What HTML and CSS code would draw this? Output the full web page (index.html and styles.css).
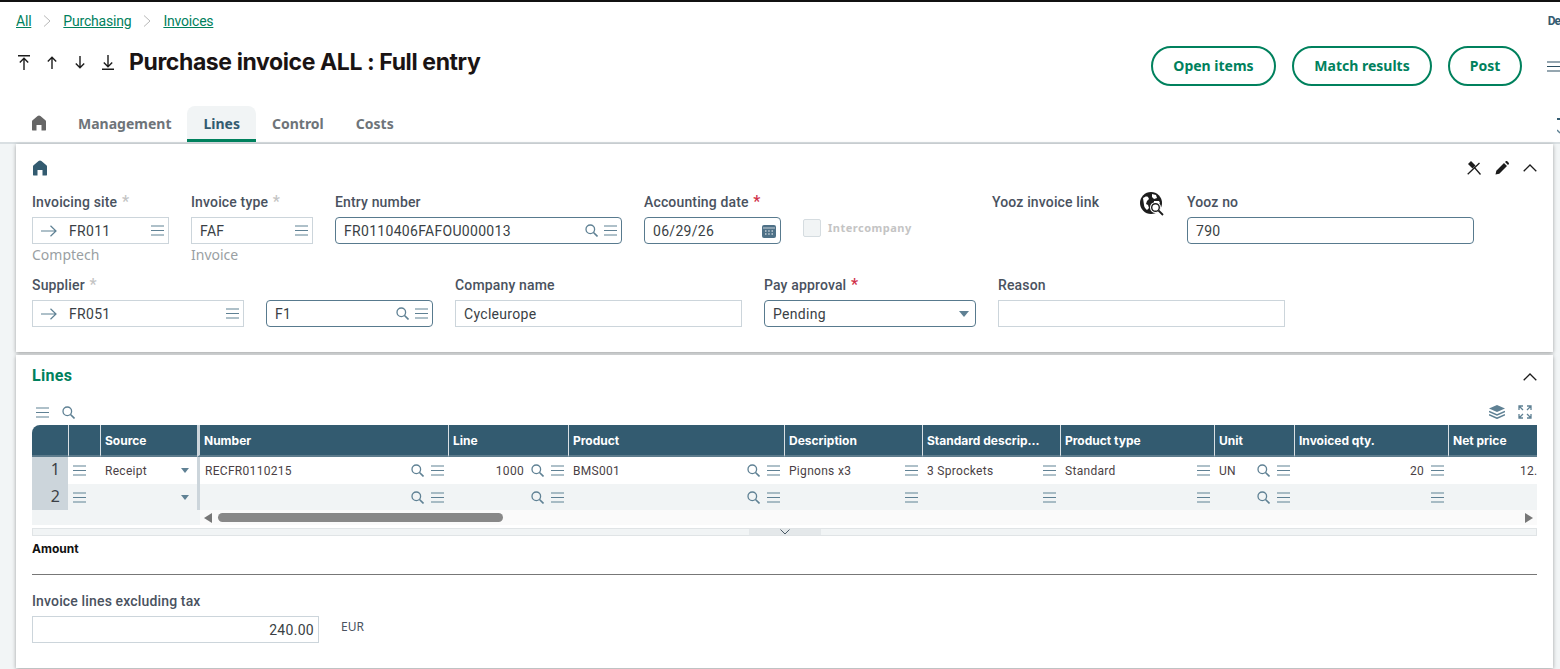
FILE: index.html
```html
<!DOCTYPE html>
<html lang="en">
<head>
    <meta charset="UTF-8">
    <title>Purchase invoice ALL : Full entry</title>
    <link rel="stylesheet" href="styles.css">
</head>
<body>
    <svg class="sprite" xmlns="http://www.w3.org/2000/svg">
        <symbol id="i-menu" viewBox="0 0 13 11"><path d="M0 1h13M0 5.500h13M0 10h13" fill="none" stroke="currentColor" stroke-width="1.200"/></symbol>
        <symbol id="i-search" viewBox="0 0 13 13"><circle cx="5.300" cy="5.300" r="4.300" fill="none" stroke="currentColor" stroke-width="1.300"/><path d="M8.500 8.500l4 4" stroke="currentColor" stroke-width="1.600"/></symbol>
        <symbol id="i-arrow" viewBox="0 0 16 12"><path d="M0 6h15M9.500 .8L15 6l-5.500 5.200" fill="none" stroke="currentColor" stroke-width="1.200"/></symbol>
        <symbol id="i-home" viewBox="0 0 16 16"><path d="M8 .5c.5 0 1 .2 1.400.5l5 4.200c.4.400.6.800.6 1.400V15c0 .3-.2.500-.5.500H10.500V10h-5v5.500H1.500c-.3 0-.5-.2-.5-.5V6.600c0-.6.200-1 .6-1.400L6.600 1C7 .7 7.500.5 8 .5z" fill="currentColor"/></symbol>
        <symbol id="i-chev" viewBox="0 0 14 8"><path d="M.7 7.300L7 1l6.300 6.300" fill="none" stroke="currentColor" stroke-width="1.300"/></symbol>
        <symbol id="i-caret" viewBox="0 0 10 6"><path d="M0 0h10L5 6z" fill="currentColor"/></symbol>
        <symbol id="i-top" viewBox="0 0 12 15"><path d="M0 .7h12M6 15V3.500M1.800 7.500L6 3.300l4.200 4.200" fill="none" stroke="currentColor" stroke-width="1.400"/></symbol>
        <symbol id="i-up" viewBox="0 0 12 15"><path d="M6 14V2.500M1.800 6.500L6 2.300l4.200 4.200" fill="none" stroke="currentColor" stroke-width="1.400"/></symbol>
        <symbol id="i-down" viewBox="0 0 12 15"><path d="M6 1v11.500M1.800 8.500L6 12.700l4.200-4.200" fill="none" stroke="currentColor" stroke-width="1.400"/></symbol>
        <symbol id="i-bottom" viewBox="0 0 12 15"><path d="M0 14.300h12M6 0v11.500M1.800 7.500L6 11.700l4.200-4.200" fill="none" stroke="currentColor" stroke-width="1.400"/></symbol>
    </svg>

    <div class="topline"></div>

    <header class="header">
        <div class="crumbs">
            <a href="#">All</a>
            <svg class="crumb-sep" viewBox="0 0 7 12"><path d="M.5.5L6.500 6 .5 11.500" fill="none" stroke="currentColor"/></svg>
            <a href="#">Purchasing</a>
            <svg class="crumb-sep" viewBox="0 0 7 12"><path d="M.5.5L6.500 6 .5 11.500" fill="none" stroke="currentColor"/></svg>
            <a href="#">Invoices</a>
            <span class="user">De</span>
        </div>
        <div class="title-row">
            <div class="nav-arrows">
                <svg class="nav-arrow"><use href="#i-top"/></svg>
                <svg class="nav-arrow"><use href="#i-up"/></svg>
                <svg class="nav-arrow"><use href="#i-down"/></svg>
                <svg class="nav-arrow"><use href="#i-bottom"/></svg>
            </div>
            <h1>Purchase invoice ALL : Full entry</h1>
            <div class="actions">
                <button class="pill pill-open">Open items</button>
                <button class="pill pill-match">Match results</button>
                <button class="pill pill-post">Post</button>
                <svg class="page-menu"><use href="#i-menu"/></svg>
            </div>
        </div>
        <nav class="tabs">
            <svg class="tab-home"><use href="#i-home"/></svg>
            <a class="tab" href="#">Management</a>
            <a class="tab active" href="#">Lines</a>
            <a class="tab" href="#">Control</a>
            <a class="tab" href="#">Costs</a>
            <svg class="tab-edge" viewBox="0 0 3 17"><path d="M0 0h3v2H0z" fill="#335b70"/><path d="M0 12l3 3" fill="none" stroke="#5f8194" stroke-width="1.500"/></svg>
        </nav>
    </header>

    <main class="content">
        <section class="card card-top">
            <div class="card-head">
                <svg class="card-home"><use href="#i-home"/></svg>
                <div class="card-tools">
                    <svg class="tool" viewBox="0 0 14 14"><path d="M2.500 1.500L7 6" fill="none" stroke="#1c1c1c" stroke-width="4.200"/><path d="M7 6l6.500 7.500M.7 13.300L12.500 2" fill="none" stroke="#1c1c1c" stroke-width="1.300"/></svg>
                    <svg class="tool" viewBox="0 0 14 14"><path d="M.5 13.500l.8-3.800L9 2l3 3-7.700 7.700zM10 1l.8-.7c.5-.4 1-.4 1.500 0l1.400 1.400c.4.500.4 1 0 1.500L13 4z" fill="#1c1c1c"/></svg>
                    <svg class="tool tool-chev"><use href="#i-chev"/></svg>
                </div>
            </div>

            <div class="field-row">
                <div class="field w-137">
                    <label>Invoicing site <span class="star">*</span></label>
                    <div class="input plain"><svg class="go"><use href="#i-arrow"/></svg><span class="val">FR011</span><svg class="ico"><use href="#i-menu"/></svg></div>
                    <div class="hint">Comptech</div>
                </div>
                <div class="field w-122">
                    <label>Invoice type <span class="star">*</span></label>
                    <div class="input plain"><span class="val">FAF</span><svg class="ico"><use href="#i-menu"/></svg></div>
                    <div class="hint">Invoice</div>
                </div>
                <div class="field w-287">
                    <label>Entry number</label>
                    <div class="input edit"><span class="val">FR0110406FAFOU000013</span><svg class="ico-s"><use href="#i-search"/></svg><svg class="ico"><use href="#i-menu"/></svg></div>
                </div>
                <div class="field w-137">
                    <label>Accounting date <span class="star req">*</span></label>
                    <div class="input edit"><span class="val">06/29/26</span>
                        <svg class="ico-cal" viewBox="0 0 14 14"><path d="M2 1h10a2 2 0 0 1 2 2v9a2 2 0 0 1-2 2H2a2 2 0 0 1-2-2V3a2 2 0 0 1 2-2z" fill="#4f7187"/><path d="M1 4h12" stroke="#fff" stroke-width=".7"/><path d="M3 7h1.500M6.200 7h1.500M9.500 7H11M3 10h1.500M6.200 10h1.500M9.500 10H11" stroke="#fff" stroke-width="1.200"/></svg>
                    </div>
                </div>
                <div class="check-field">
                    <span class="check"></span>
                    <span class="check-label">Intercompany</span>
                </div>
                <div class="link-field">
                    <label>Yooz invoice link</label>
                    <svg class="globe" viewBox="0 0 24 24">
                        <circle cx="11" cy="11" r="11" fill="#1c1c1c"/>
                        <path d="M3 6c2-1 3-2 5-1l1 2-2 2-1 3 2 1 1 3-2 2c-2-2-3-3-3-5zM12 2l4 1 1 3-3 1-2-2zM14 9l5 0 1 2-3 2-3-1z" fill="#fff"/>
                        <circle cx="15.500" cy="15.500" r="5.500" fill="#fff"/>
                        <circle cx="15.500" cy="15.500" r="3.800" fill="#fff" stroke="#1c1c1c" stroke-width="1.400"/>
                        <path d="M18.500 18.500l4.500 4.500" stroke="#1c1c1c" stroke-width="1.800"/>
                    </svg>
                </div>
                <div class="field w-287">
                    <label>Yooz no</label>
                    <div class="input edit"><span class="val">790</span></div>
                </div>
            </div>

            <div class="field-row row-two">
                <div class="field w-212">
                    <label>Supplier <span class="star">*</span></label>
                    <div class="input plain"><svg class="go"><use href="#i-arrow"/></svg><span class="val">FR051</span><svg class="ico"><use href="#i-menu"/></svg></div>
                </div>
                <div class="field w-167">
                    <label>&nbsp;</label>
                    <div class="input edit"><span class="val">F1</span><svg class="ico-s"><use href="#i-search"/></svg><svg class="ico"><use href="#i-menu"/></svg></div>
                </div>
                <div class="field w-287">
                    <label>Company name</label>
                    <div class="input plain"><span class="val">Cycleurope</span></div>
                </div>
                <div class="field w-212">
                    <label>Pay approval <span class="star req">*</span></label>
                    <div class="input edit"><span class="val">Pending</span><svg class="ico-caret"><use href="#i-caret"/></svg></div>
                </div>
                <div class="field w-287">
                    <label>Reason</label>
                    <div class="input plain"></div>
                </div>
            </div>
        </section>

        <section class="card card-lines">
            <div class="lines-head">
                <h2>Lines</h2>
                <svg class="tool tool-chev"><use href="#i-chev"/></svg>
            </div>
            <div class="grid-tools">
                <svg class="ico"><use href="#i-menu"/></svg>
                <svg class="ico-s"><use href="#i-search"/></svg>
                <svg class="layers" viewBox="0 0 16 14"><path d="M8 0l8 3.500L8 7 0 3.500z" fill="#5f8194"/><path d="M0 6.500L8 10l8-3.500M0 9.800l8 3.500 8-3.500" fill="none" stroke="#5f8194" stroke-width="1.500"/></svg>
                <svg class="expand" viewBox="0 0 14 14"><path d="M1 5V1h4M9 1h4v4M13 9v4H9M5 13H1V9M1.500 1.500L5 5M12.500 1.500L9 5M12.500 12.500L9 9M1.500 12.500L5 9" fill="none" stroke="#5f8194" stroke-width="1.300"/></svg>
            </div>

            <table class="lines-table">
                <colgroup>
                    <col class="c-36"><col class="c-32"><col class="c-97"><col class="c-251"><col class="c-120"><col class="c-216"><col class="c-138"><col class="c-138"><col class="c-154"><col class="c-80"><col class="c-154"><col class="c-89">
                </colgroup>
                <thead>
                    <tr>
                        <th class="corner"></th><th></th><th>Source</th><th class="split">Number</th><th>Line</th><th>Product</th><th>Description</th><th>Standard descrip...</th><th>Product type</th><th>Unit</th><th>Invoiced qty.</th><th>Net price</th>
                    </tr>
                </thead>
                <tbody>
                    <tr>
                        <td class="idx">1</td>
                        <td><div class="cell"><svg class="ico"><use href="#i-menu"/></svg></div></td>
                        <td><div class="cell src"><span class="txt">Receipt</span><svg class="ico-caret"><use href="#i-caret"/></svg></div></td>
                        <td class="split"><div class="cell"><span class="txt">RECFR0110215</span><svg class="ico-s"><use href="#i-search"/></svg><svg class="ico"><use href="#i-menu"/></svg></div></td>
                        <td><div class="cell"><span class="txt num">1000</span><svg class="ico-s"><use href="#i-search"/></svg><svg class="ico"><use href="#i-menu"/></svg></div></td>
                        <td><div class="cell"><span class="txt">BMS001</span><svg class="ico-s"><use href="#i-search"/></svg><svg class="ico"><use href="#i-menu"/></svg></div></td>
                        <td><div class="cell"><span class="txt">Pignons x3</span><svg class="ico"><use href="#i-menu"/></svg></div></td>
                        <td><div class="cell"><span class="txt">3 Sprockets</span><svg class="ico"><use href="#i-menu"/></svg></div></td>
                        <td><div class="cell"><span class="txt">Standard</span><svg class="ico"><use href="#i-menu"/></svg></div></td>
                        <td><div class="cell"><span class="txt">UN</span><svg class="ico-s"><use href="#i-search"/></svg><svg class="ico"><use href="#i-menu"/></svg></div></td>
                        <td><div class="cell"><span class="txt num">20</span><svg class="ico"><use href="#i-menu"/></svg></div></td>
                        <td><div class="cell price"><span class="txt">12.</span></div></td>
                    </tr>
                    <tr class="even">
                        <td class="idx">2</td>
                        <td><div class="cell"><svg class="ico"><use href="#i-menu"/></svg></div></td>
                        <td><div class="cell src"><span class="txt"></span><svg class="ico-caret"><use href="#i-caret"/></svg></div></td>
                        <td class="split"><div class="cell"><span class="txt"></span><svg class="ico-s"><use href="#i-search"/></svg><svg class="ico"><use href="#i-menu"/></svg></div></td>
                        <td><div class="cell"><span class="txt"></span><svg class="ico-s"><use href="#i-search"/></svg><svg class="ico"><use href="#i-menu"/></svg></div></td>
                        <td><div class="cell"><span class="txt"></span><svg class="ico-s"><use href="#i-search"/></svg><svg class="ico"><use href="#i-menu"/></svg></div></td>
                        <td><div class="cell"><span class="txt"></span><svg class="ico"><use href="#i-menu"/></svg></div></td>
                        <td><div class="cell"><span class="txt"></span><svg class="ico"><use href="#i-menu"/></svg></div></td>
                        <td><div class="cell"><span class="txt"></span><svg class="ico"><use href="#i-menu"/></svg></div></td>
                        <td><div class="cell"><span class="txt"></span><svg class="ico-s"><use href="#i-search"/></svg><svg class="ico"><use href="#i-menu"/></svg></div></td>
                        <td><div class="cell"><span class="txt"></span><svg class="ico"><use href="#i-menu"/></svg></div></td>
                        <td></td>
                    </tr>
                </tbody>
            </table>

            <div class="hscroll">
                <div class="hscroll-fixed"></div>
                <div class="hscroll-track">
                    <svg class="scroll-arrow" viewBox="0 0 8 10"><path d="M8 0v10L0 5z" fill="#777"/></svg>
                    <div class="scroll-thumb"></div>
                    <svg class="scroll-arrow end" viewBox="0 0 8 10"><path d="M0 0v10l8-5z" fill="#777"/></svg>
                </div>
            </div>
            <div class="resize-bar">
                <div class="resize-grip"><svg viewBox="0 0 10 6"><path d="M.5.500L5 5 9.500.500" fill="none" stroke="#4a5a66"/></svg></div>
            </div>

            <h3>Amount</h3>
            <hr class="rule">

            <div class="amount-row">
                <div class="field w-287">
                    <label>Invoice lines excluding tax</label>
                    <div class="input plain right"><span class="val">240.00</span></div>
                </div>
                <span class="currency">EUR</span>
            </div>
        </section>
    </main>
</body>
</html>
```

FILE: styles.css
```css
* {
    margin: 0;
    padding: 0;
    box-sizing: border-box;
}

body {
    font-family: "Noto Sans", sans-serif;
    height: 669px;
    overflow: hidden;
    background-color: #fff;
    color: #1c1c1c;
}

.sprite {
    display: none;
}

.topline {
    height: 2px;
    background-color: #111;
}

.header {
    height: 140px;
    padding-left: 16px;
    display: flex;
    flex-direction: column;
}

.crumbs {
    display: flex;
    align-items: center;
    gap: 12px;
    height: 38px;
    font-family: Roboto, sans-serif;
    font-size: 14px;
    letter-spacing: -0.2px;
}

.crumbs a {
    color: #00815d;
}

.crumb-sep {
    width: 8px;
    height: 12px;
    color: #b8b8b8;
}

.user {
    margin-left: auto;
    font-size: 12px;
    font-weight: 700;
    letter-spacing: -1px;
    color: #335b70;
}

.title-row {
    display: flex;
    align-items: center;
    height: 44px;
}

.nav-arrows {
    display: flex;
    gap: 16px;
    margin-left: 2px;
    margin-right: 15px;
}

.nav-arrow {
    width: 12px;
    height: 15px;
    color: #1c1c1c;
}

h1 {
    font-family: Inter, sans-serif;
    font-size: 23px;
    font-weight: 700;
    letter-spacing: -0.4px;
    color: #1a1414;
}

.actions {
    margin-left: auto;
    display: flex;
    align-items: center;
    gap: 16px;
    margin-top: 8px;
}

.pill {
    height: 40px;
    padding-bottom: 2px;
    border: 2px solid #00815d;
    border-radius: 20px;
    background: #fff;
    color: #00815d;
    font-family: "Noto Sans", sans-serif;
    font-size: 14px;
    font-weight: 700;
}

.pill-open {
    width: 125px;
}

.pill-match {
    width: 140px;
}

.pill-post {
    width: 74px;
}

.page-menu {
    width: 13px;
    height: 11px;
    margin-left: 9px;
    color: #2c4f62;
    flex-shrink: 0;
}

.tabs {
    display: flex;
    align-items: flex-end;
    margin-top: 22px;
    height: 36px;
}

.tab-home {
    width: 16px;
    height: 16px;
    color: #666;
    margin: 0 15px 11px 15px;
}

.tab {
    height: 36px;
    padding: 8px 16px 0;
    font-size: 14px;
    font-weight: 700;
    color: #6e7479;
    text-decoration: none;
}

.tab.active {
    background-color: #f1f4f5;
    border-bottom: 3px solid #00815d;
    border-radius: 8px 8px 0 0;
    color: #335b70;
}

.tab-edge {
    width: 3px;
    height: 17px;
    margin-left: auto;
    margin-bottom: 7px;
    flex-shrink: 0;
}

.content {
    height: 527px;
    padding: 0 7px 0 16px;
    background-color: #f2f5f6;
    border-top: 2px solid #d9dfe2;
}

.card {
    background-color: #fff;
    box-shadow: 0 1px 4px rgba(0, 0, 0, 0.35);
}

.card-top {
    height: 208px;
    padding: 16px 16px 0;
}

.card-head {
    display: flex;
    justify-content: space-between;
    height: 34px;
}

.card-home {
    width: 16px;
    height: 16px;
    color: #335b70;
}

.card-tools {
    display: flex;
    gap: 14px;
    margin-top: 1px;
}

.tool {
    width: 14px;
    height: 14px;
}

.tool-chev {
    color: #1c1c1c;
}

.field-row {
    display: flex;
    gap: 22px;
}

.row-two {
    margin-top: 13px;
}

.field {
    flex-shrink: 0;
}

.field label,
.link-field label {
    display: block;
    height: 23px;
    font-family: Roboto, sans-serif;
    font-size: 14px;
    font-weight: 500;
    line-height: 16px;
    letter-spacing: 0.15px;
    color: #4a5260;
    white-space: nowrap;
}

.star {
    margin-left: 1px;
    font-size: 16px;
    color: #c4c4c4;
}

.star.req {
    color: #d0314a;
}

.w-122 {
    width: 122px;
}

.w-137 {
    width: 137px;
}

.w-167 {
    width: 167px;
}

.w-212 {
    width: 212px;
}

.w-287 {
    width: 287px;
}

.input {
    display: flex;
    align-items: center;
    height: 27px;
    padding: 0 4px 0 8px;
    gap: 6px;
    color: #335b70;
}

.input.plain {
    border: 1px solid #ccd5db;
}

.input.edit {
    border: 1px solid #587a8e;
    border-radius: 4px;
}

.val {
    flex: 1;
    font-family: Roboto, sans-serif;
    font-size: 14px;
    letter-spacing: 0.3px;
    color: #3a3f45;
    white-space: nowrap;
}

.input.right .val {
    text-align: right;
}

.go {
    width: 16px;
    height: 12px;
    margin-right: 6px;
    color: #5f8194;
}

.ico {
    width: 13px;
    height: 11px;
    flex-shrink: 0;
    color: #5f8194;
}

.ico-s {
    width: 13px;
    height: 13px;
    flex-shrink: 0;
    color: #5f8194;
}

.ico-cal {
    width: 14px;
    height: 14px;
    flex-shrink: 0;
}

.ico-caret {
    width: 10px;
    height: 6px;
    flex-shrink: 0;
    margin-right: 2px;
    color: #5f8194;
}

.hint {
    margin-top: 1px;
    font-size: 14px;
    color: #9a9fa3;
}

.check-field {
    display: flex;
    align-items: center;
    gap: 7px;
    width: 167px;
    height: 27px;
    margin-top: 20px;
}

.check {
    width: 18px;
    height: 18px;
    border: 1px solid #d5dce0;
    border-radius: 2px;
    background-color: #f1f4f5;
}

.check-label {
    font-size: 11px;
    font-weight: 700;
    letter-spacing: 0.5px;
    color: #c4c4c4;
}

.link-field {
    display: flex;
    width: 173px;
}

.link-field label {
    width: 148px;
    flex-shrink: 0;
}

.globe {
    width: 24px;
    height: 24px;
    margin-top: -2px;
    flex-shrink: 0;
}

.card-lines {
    height: 313px;
    margin-top: 3px;
    padding: 0 16px;
}

.lines-head {
    display: flex;
    justify-content: space-between;
    align-items: center;
    height: 40px;
}

.lines-head .tool {
    margin-top: 4px;
}

h2 {
    font-family: Roboto, sans-serif;
    font-size: 16px;
    font-weight: 700;
    letter-spacing: 0.3px;
    color: #00815d;
}

.grid-tools {
    display: flex;
    align-items: center;
    height: 30px;
    padding: 10px 5px 6px 4px;
    gap: 13px;
}

.layers {
    width: 16px;
    height: 14px;
    margin-left: auto;
}

.expand {
    width: 14px;
    height: 14px;
}

.lines-table {
    width: 1505px;
    table-layout: fixed;
    border-collapse: separate;
    border-spacing: 0;
}

.c-36 { width: 36px; }
.c-32 { width: 32px; }
.c-97 { width: 97px; }
.c-251 { width: 251px; }
.c-120 { width: 120px; }
.c-216 { width: 216px; }
.c-138 { width: 138px; }
.c-154 { width: 154px; }
.c-80 { width: 80px; }
.c-89 { width: 89px; }

th {
    height: 32px;
    padding-left: 4px;
    background-color: #335b70;
    border-left: 1px solid #d9e0e4;
    border-bottom: 2px solid #5c7b8c;
    color: #fff;
    font-family: Inter, sans-serif;
    font-size: 12px;
    font-weight: 700;
    text-align: left;
    white-space: nowrap;
    overflow: hidden;
}

th.corner {
    border-left: 0;
    border-top-left-radius: 8px;
}

th.split,
td.split {
    border-left: 3px solid #ccd5db;
}

td {
    height: 27px;
    padding: 0;
}

tbody tr.even td {
    height: 26px;
    background-color: #f1f4f5;
}

td.idx,
tbody tr.even td.idx {
    background-color: #ccd5db;
    padding: 0 8px 3px 0;
    text-align: right;
    font-size: 16px;
    color: #3a3f45;
}

.cell {
    display: flex;
    align-items: center;
    gap: 7px;
    height: 26px;
    padding: 0 4px 0 5px;
}

.txt {
    flex: 1;
    font-family: Roboto, sans-serif;
    font-size: 12px;
    letter-spacing: 0.3px;
    color: #4a3f45;
    white-space: nowrap;
}

.txt.num {
    text-align: right;
}

.src .ico-caret {
    margin-right: 4px;
    width: 8px;
    height: 5px;
}

.cell.price {
    padding: 0 0 0 72px;
}

.hscroll {
    display: flex;
    height: 15px;
}

.hscroll-fixed {
    width: 168px;
    background-color: #f1f4f5;
}

.hscroll-track {
    flex: 1;
    display: flex;
    align-items: center;
    padding: 0 4px;
    background-color: #fafafa;
}

.scroll-arrow {
    width: 8px;
    height: 10px;
    flex-shrink: 0;
}

.scroll-arrow.end {
    margin-left: auto;
}

.scroll-thumb {
    width: 285px;
    height: 9px;
    margin-left: 6px;
    border-radius: 5px;
    background-color: #888;
}

.resize-bar {
    display: flex;
    justify-content: center;
    height: 8px;
    margin-top: 3px;
    background-color: #f1f4f5;
    border: 1px solid #e0e4e6;
}

.resize-grip {
    display: flex;
    justify-content: center;
    width: 72px;
    background-color: #e4e8ea;
}

.resize-grip svg {
    width: 10px;
    height: 6px;
}

h3 {
    margin-top: 5px;
    font-family: Inter, sans-serif;
    font-size: 12px;
    font-weight: 700;
    color: #111;
}

.rule {
    margin-top: 18px;
    border: 0;
    border-top: 1px solid #777;
}

.amount-row {
    display: flex;
    gap: 22px;
    margin-top: 18px;
}

.currency {
    margin-top: 25px;
    font-size: 12px;
    color: #4a5260;
}
```
